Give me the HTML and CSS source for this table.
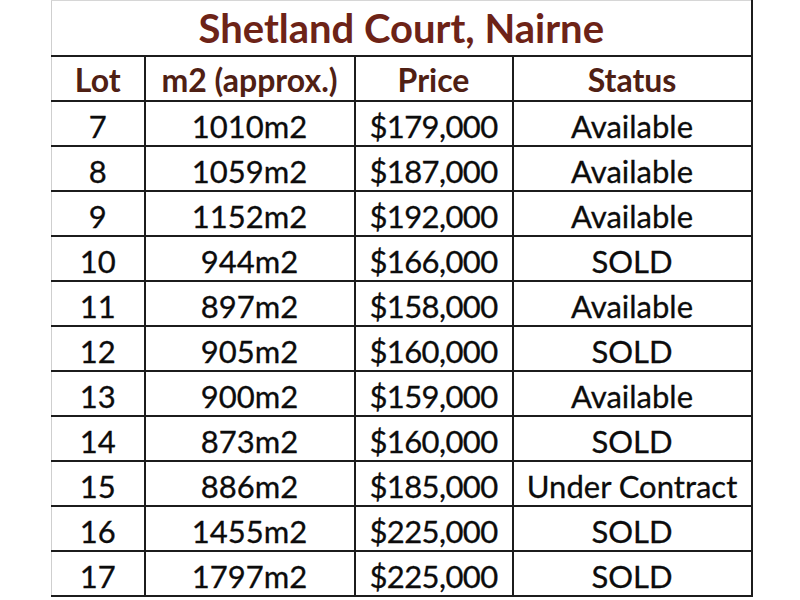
FILE: index.html
```html
<!DOCTYPE html>
<html>
<head>
<meta charset="utf-8">
<link rel="stylesheet" href="styles.css">
</head>
<body>
<table class="lots">
  <colgroup>
    <col class="c-lot"><col class="c-size"><col class="c-price"><col class="c-status">
  </colgroup>
  <tr class="title-row"><th colspan="4" class="title">Shetland Court, Nairne</th></tr>
  <tr class="head-row"><th class="first">Lot</th><th>m2 (approx.)</th><th>Price</th><th>Status</th></tr>
  <tr><td class="first">7</td><td>1010m2</td><td class="price">$179,000</td><td>Available</td></tr>
  <tr><td class="first">8</td><td>1059m2</td><td class="price">$187,000</td><td>Available</td></tr>
  <tr><td class="first">9</td><td>1152m2</td><td class="price">$192,000</td><td>Available</td></tr>
  <tr><td class="first">10</td><td>944m2</td><td class="price">$166,000</td><td>SOLD</td></tr>
  <tr><td class="first">11</td><td>897m2</td><td class="price">$158,000</td><td>Available</td></tr>
  <tr><td class="first">12</td><td>905m2</td><td class="price">$160,000</td><td>SOLD</td></tr>
  <tr><td class="first">13</td><td>900m2</td><td class="price">$159,000</td><td>Available</td></tr>
  <tr><td class="first">14</td><td>873m2</td><td class="price">$160,000</td><td>SOLD</td></tr>
  <tr><td class="first">15</td><td>886m2</td><td class="price">$185,000</td><td>Under Contract</td></tr>
  <tr><td class="first">16</td><td>1455m2</td><td class="price">$225,000</td><td>SOLD</td></tr>
  <tr><td class="first">17</td><td>1797m2</td><td class="price">$225,000</td><td>SOLD</td></tr>
</table>
</body>
</html>
```

FILE: styles.css
```css
html, body {
  margin: 0;
  padding: 0;
  background: #ffffff;
}
body {
  width: 800px;
  height: 600px;
  overflow: hidden;
  font-family: Lato, "Open Sans", sans-serif;
}
.lots {
  margin-left: 51px;
  border-collapse: collapse;
  table-layout: fixed;
  width: 700px;
}
.c-lot { width: 93px; }
.c-size { width: 210px; }
.c-price { width: 158px; }
.c-status { width: 239px; }
.lots th, .lots td {
  border: 2px solid #1c1c1c;
  padding: 0;
  text-align: center;
  white-space: nowrap;
  line-height: 1;
}
.lots .first { border-left: 1px solid #cfcfcf; }
.title-row th { border-top: 1px solid #d6d6d6; border-left: 1px solid #cfcfcf; }
.title {
  height: 54px;
  font-size: 40px;
  font-weight: 700;
  color: #6d2317;
  padding-top: 4px;
}
.head-row th {
  height: 41px;
  font-size: 32px;
  font-weight: 700;
  color: #4f2014;
  padding-top: 2px;
}
.lots td {
  height: 38px;
  font-size: 31px;
  font-weight: 400;
  color: #0c0c0c;
  padding-top: 5px;
  -webkit-text-stroke: 0.3px #0c0c0c;
}
.lots td.price { letter-spacing: -0.6px; }
```
